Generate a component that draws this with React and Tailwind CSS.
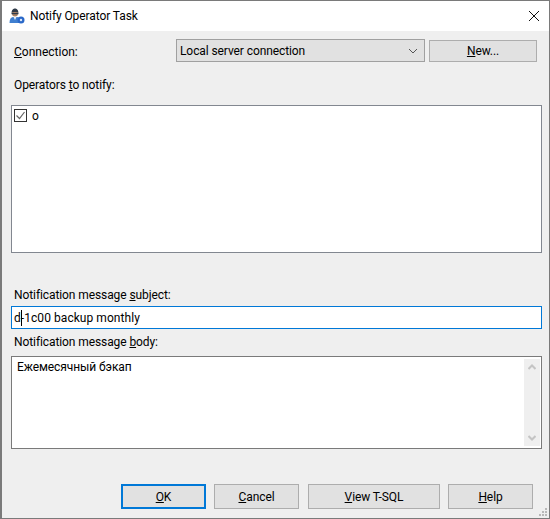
const Btn = ({ children, className = '' }) => (
  <button className={`flex items-center justify-center bg-[#e1e1e1] border border-[#adadad] text-[12px] tracking-[-0.09px] text-black ${className}`}>
    {children}
  </button>
);

const PersonIcon = () => (
  <svg width="16" height="16" viewBox="0 0 16 16">
    <path d="M0.500 15c0-4 1.500-6 3.500-6h4c2 0 3.500 1.500 3.500 3.500V15z" fill="#3f7fd0" />
    <path d="M4.500 9h3L6 12z" fill="#e8eef6" />
    <circle cx="6" cy="5.500" r="3" fill="#a67f62" />
    <path d="M2.500 5C2.800 1.500 4.500 0.500 6 0.500S9.200 1.500 9.500 5C8 3.600 4 3.600 2.500 5z" fill="#2f3a48" />
    <rect x="2.500" y="5" width="7" height="1.200" fill="#2f3a48" />
    <circle cx="12" cy="12" r="3.500" fill="#2a68c8" />
    <circle cx="12" cy="12" r="1.200" fill="#dce8f8" />
  </svg>
);

const App = () => {
  return (
    <div className="w-[550px] h-[519px] bg-white overflow-hidden" style={{ fontFamily: 'Roboto, sans-serif' }}>
      <div className="relative w-full h-full flex flex-col border border-[#7a7a7a] border-l-2 text-[12px] tracking-[-0.09px] text-black leading-[16px]">
        {/* Title bar */}
        <div className="h-[30px] shrink-0 bg-white flex items-center pl-[7px] pr-[9px]">
          <PersonIcon />
          <span className="ml-[5px]">Notify Operator Task</span>
          <svg className="ml-auto" width="12" height="12" viewBox="0 0 12 12">
            <path d="M1 1l10 10M11 1L1 11" stroke="#111" strokeWidth="1" fill="none" />
          </svg>
        </div>

        {/* Body */}
        <div className="flex-1 bg-[#efefef] flex flex-col pl-[9px] pr-[6px]">
          <div className="flex items-center mt-[8px] h-[23px]">
            <span className="ml-[3px] w-[162px] pt-[2px] tracking-normal"><u>C</u>onnection:</span>
            <div className="w-[249px] h-[23px] bg-[#e1e1e1] border border-[#a0a0a0] flex items-center pl-[3px] pr-[6px]">
              <span>Local server connection</span>
              <svg className="ml-auto" width="10" height="6" viewBox="0 0 10 6">
                <path d="M1 1l4 4 4-4" stroke="#555" strokeWidth="1" fill="none" />
              </svg>
            </div>
            <Btn className="ml-[4px] w-[108px] h-[22px]"><span><u>N</u>ew...</span></Btn>
          </div>

          <div className="ml-[3px] mt-[15px]">Operators <u>t</u>o notify:</div>

          <div className="mt-[12px] h-[148px] w-[531px] bg-white border border-[#828790] pt-[3px] pl-[2px]">
            <div className="flex items-center h-[13px]">
              <div className="w-[13px] h-[13px] border border-[#333] flex items-center justify-center">
                <svg width="11" height="9" viewBox="0 0 11 9">
                  <path d="M1.500 4.500l3 3 5-6.500" stroke="#666" strokeWidth="1.200" fill="none" />
                </svg>
              </div>
              <span className="ml-[5px]">o</span>
            </div>
          </div>

          <div className="ml-[3px] mt-[34px]">Notification message <u>s</u>ubject:</div>

          <div className="mt-[3px] h-[23px] w-[531px] bg-white border border-[#0078d7] flex items-center pl-[2px] tracking-[0.06px]">
            <span>d</span>
            <span className="inline-block w-px h-[16px] bg-black"></span>
            <span className="-ml-px">-1c00 backup monthly</span>
          </div>

          <div className="ml-[3px] mt-[5px]">Notification message <u>b</u>ody:</div>

          <div className="mt-[6px] h-[93px] w-[531px] bg-white border border-[#7a7a7a] flex p-px">
            <div className="flex-1 pl-[4px] pt-[1px]">Ежемесячный бэкап</div>
            <div className="w-[16px] bg-[#efefef] my-px flex flex-col items-center justify-between py-[5px]">
              <svg width="8" height="6" viewBox="0 0 8 6">
                <path d="M0.500 5L4 1.500 7.500 5" stroke="#c4c4c4" strokeWidth="2" fill="none" />
              </svg>
              <svg width="8" height="6" viewBox="0 0 8 6">
                <path d="M0.500 1L4 4.500 7.500 1" stroke="#c4c4c4" strokeWidth="2" fill="none" />
              </svg>
            </div>
          </div>

          <div className="flex mt-[35px] ml-[110px]">
            <Btn className="w-[85px] h-[25px] !border-2 !border-[#0078d7]"><span><u>O</u>K</span></Btn>
            <Btn className="ml-[8px] w-[85px] h-[25px]"><span><u>C</u>ancel</span></Btn>
            <Btn className="ml-[9px] w-[132px] h-[25px]"><span><u>V</u>iew T-SQL</span></Btn>
            <Btn className="ml-[8px] w-[85px] h-[25px]"><span><u>H</u>elp</span></Btn>
          </div>
        </div>

        {/* Resize grip */}
        <svg className="absolute right-[1px] bottom-[1px]" width="9" height="9" viewBox="0 0 9 9" fill="#b8b8b8">
          <rect x="6" y="0" width="2" height="2" />
          <rect x="3" y="3" width="2" height="2" />
          <rect x="6" y="3" width="2" height="2" />
          <rect x="0" y="6" width="2" height="2" />
          <rect x="3" y="6" width="2" height="2" />
          <rect x="6" y="6" width="2" height="2" />
        </svg>
      </div>
    </div>
  );
};

export default App;
